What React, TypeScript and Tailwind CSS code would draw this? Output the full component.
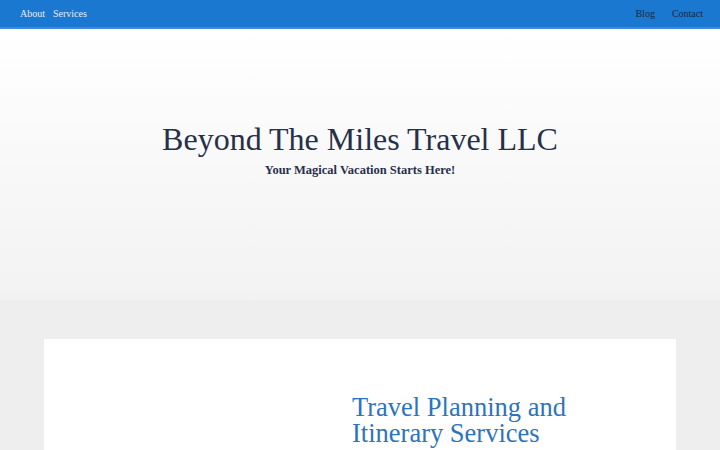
export default function App() {
  return (
    <div className="min-h-screen bg-[#eeeeee] font-['Liberation_Serif',serif]">
      {/* Top nav */}
      <header className="flex h-[29px] items-center justify-between border-b-2 border-[#3f8ad6] bg-[#1b78d0] pl-5 pr-[17px] text-[10px]">
        <nav className="flex gap-[8px] text-[#e3edf8]">
          <a href="#">About</a>
          <a href="#">Services</a>
        </nav>
        <nav className="flex gap-[17px] text-[#182a44]">
          <a href="#">Blog</a>
          <a href="#">Contact</a>
        </nav>
      </header>

      {/* Hero */}
      <section className="flex h-[271px] flex-col items-center bg-gradient-to-b from-white to-[#f2f2f2] pt-[93px]">
        <h1 className="text-[32px] leading-[34px] text-[#283049]">Beyond The Miles Travel LLC</h1>
        <p className="mt-[5px] text-[12.5px] font-bold text-[#283049]">Your Magical Vacation Starts Here!</p>
      </section>

      {/* Services card */}
      <main className="px-[44px] pt-[39px]">
        <div className="grid h-[200px] grid-cols-2 bg-white">
          <div />
          <div className="pt-[55px]">
            <h2 className="-ml-[8px] text-[26.5px] leading-[26px] text-[#2c74bd]">
              Travel Planning and
              <br />
              Itinerary Services
            </h2>
          </div>
        </div>
      </main>
    </div>
  );
}
